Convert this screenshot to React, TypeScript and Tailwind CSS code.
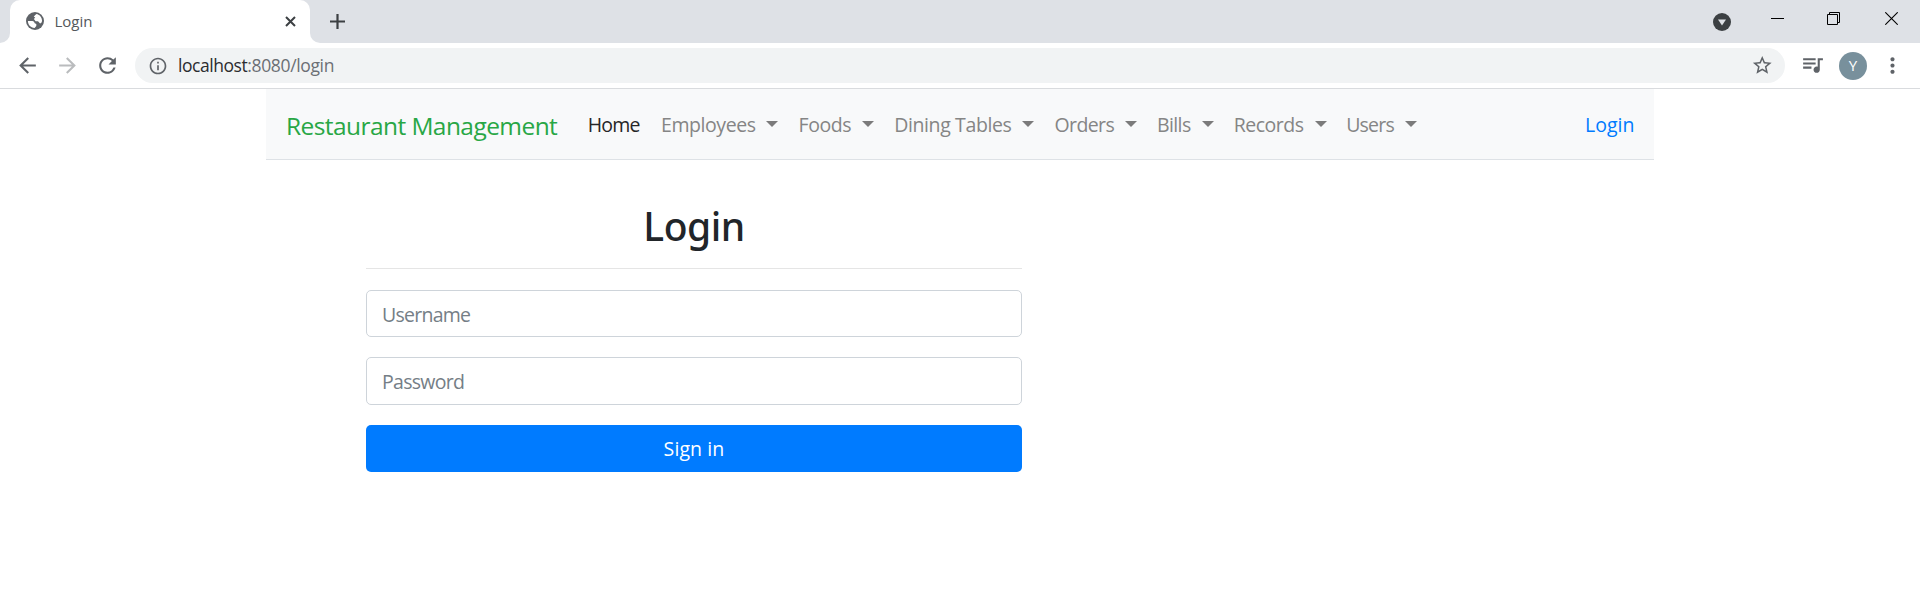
import React from "react";
import {
  MdArrowBack,
  MdArrowForward,
  MdInfoOutline,
  MdMoreVert,
  MdQueueMusic,
  MdRefresh,
  MdStarBorder,
} from "react-icons/md";

type Menu = { label: string; item: string; text: string };

const menus: Menu[] = [
  { label: "Employees", item: "w-[137.5px]", text: "w-[105.3px] tracking-[-0.42px]" },
  { label: "Foods", item: "w-[95.7px]", text: "w-[63.7px] tracking-[-0.42px]" },
  { label: "Dining Tables", item: "w-[160.3px]", text: "w-[128px] tracking-[-0.38px]" },
  { label: "Orders", item: "w-[102.5px]", text: "w-[70.3px] tracking-[-0.6px]" },
  { label: "Bills", item: "w-[76.8px]", text: "w-[45px] tracking-[-0.6px]" },
  { label: "Records", item: "w-[112.4px]", text: "w-[81px] tracking-[-0.5px]" },
  { label: "Users", item: "w-[72px]", text: "w-[59px] tracking-[-0.8px]" },
];

function Globe() {
  return (
    <svg viewBox="0 0 18 18" className="size-[18px] shrink-0">
      <circle cx="9" cy="9" r="9" fill="#5f6368" />
      <path
        d="M1.9 9h4.6q2 .2 2.2 2.3L10.3 12v2L8.6 16C4.4 15.6 1.9 12.5 1.9 9z"
        fill="#fff"
      />
      <path
        d="M10.4 2.1C14 2.8 16 5.6 16.1 9q-.4 2.3-2 2.4L12 9.2H9.6L7.9 7l1.3-1.4L7.8 4.8 9 3.2z"
        fill="#fff"
      />
    </svg>
  );
}

function TabStrip() {
  return (
    <div className="flex h-[43px] bg-[#dee1e6]">
      <div className="flex w-[10px] items-end bg-white">
        <div className="h-full w-full rounded-br-[10px] bg-[#dee1e6]" />
      </div>
      <div className="w-[300px] bg-[#dee1e6]">
        <div className="flex h-full items-center rounded-t-[10px] bg-white pl-[16px] pr-[14.5px] pb-px">
          <Globe />
          <span className="ml-[10.5px] text-[15px] text-[#54585c]">Login</span>
          <svg viewBox="0 0 11 11" className="ml-auto size-[11px]" stroke="#3c4043" strokeWidth="2">
            <path d="M1 1l9 9M10 1l-9 9" />
          </svg>
        </div>
      </div>
      <div className="w-[10px] bg-white">
        <div className="h-full w-full rounded-bl-[10px] bg-[#dee1e6]" />
      </div>
      <svg viewBox="0 0 15 15" className="ml-[10px] mt-[14px] size-[15px]" stroke="#3c4043" strokeWidth="2.2">
        <path d="M7.5 0v15M0 7.5h15" />
      </svg>
      <svg viewBox="0 0 18 18" className="ml-auto mt-[13px] size-[18px]">
        <circle cx="9" cy="9" r="9" fill="#3c4043" />
        <path d="M5 6.5h8l-4 6z" fill="#dee1e6" />
      </svg>
      <svg viewBox="0 0 13 13" className="ml-[40px] mt-[12px] size-[13px]" fill="#000">
        <path d="M0 6h13v1H0z" />
      </svg>
      <svg viewBox="0 0 13 13" className="ml-[43px] mt-[12px] size-[13px]" fill="none" stroke="#000">
        <path d="M.5 2.5h10v10H.5zM2.5 2.5v-2h10v10h-2" />
      </svg>
      <svg viewBox="0 0 13 13" className="ml-[45px] mr-[22px] mt-[12px] size-[13px]" fill="none" stroke="#000" strokeWidth="1.1">
        <path d="M.3 .3l12.4 12.4M12.7 .3L.3 12.7" />
      </svg>
    </div>
  );
}

function Toolbar() {
  return (
    <div className="flex h-[46px] items-center border-b border-[#d9dbde] bg-white pl-[15px] text-[#5f6368]">
      <MdArrowBack className="size-[25px] shrink-0" />
      <MdArrowForward className="ml-[15px] size-[25px] shrink-0 text-[#babcbe]" />
      <MdRefresh className="ml-[15px] size-[25px] shrink-0" />
      <div className="ml-[15px] flex h-[35px] w-[1650px] shrink-0 items-center rounded-full bg-[#f1f3f4] pl-[12.5px] pr-[11.5px]">
        <MdInfoOutline className="size-[20px] shrink-0" />
        <span className="ml-[10.5px] text-[17.5px]">
          <span className="tracking-[-0.45px] text-[#2b2c2f]">localhost</span>
          <span className="tracking-[-0.35px] text-[#6b6f74]">:8080/login</span>
        </span>
        <MdStarBorder className="ml-auto size-[22.5px] shrink-0" />
      </div>
      <MdQueueMusic className="mb-[3px] ml-[15px] size-[25px] shrink-0" />
      <div className="ml-[14px] flex size-[28px] shrink-0 items-center justify-center rounded-full bg-[#78909c] text-[15px] text-white">
        Y
      </div>
      <MdMoreVert className="ml-[13px] size-[25px] shrink-0" />
    </div>
  );
}

function Navbar() {
  return (
    <nav className="flex h-[71px] items-center border-b border-[#dee2e6] bg-[#f8f9fa] pl-[20px] pr-[19.5px] pt-px text-[19.5px] leading-[30px] text-[#858585]">
      <a className="w-[301.8px] shrink-0 whitespace-nowrap pt-[3px] text-[24.5px] tracking-[-0.57px] text-[#28a745]">
        Restaurant Management
      </a>
      <a className="w-[73.2px] shrink-0 tracking-[-0.8px] text-[#262627]">Home</a>
      {menus.map((m) => (
        <a key={m.label} className={`flex shrink-0 items-center ${m.item}`}>
          <span className={`shrink-0 whitespace-nowrap ${m.text}`}>{m.label}</span>
          <svg viewBox="0 0 12 6" className="mb-[1px] h-[6px] w-[12px] shrink-0" fill="#7b7b7b">
            <path d="M0 0h12L6 6z" />
          </svg>
        </a>
      ))}
      <a className="ml-auto text-[#007bff]">Login</a>
    </nav>
  );
}

function LoginForm() {
  const field =
    "block w-full rounded-[5px] border border-[#ced4da] bg-white px-[15px] text-[19.5px] text-[#495057] outline-none placeholder:text-[#757e86]";
  return (
    <form className="ml-[100px] mt-[42px] w-[656px]">
      <h1 className="text-center font-['Noto_Sans'] text-[39px] leading-[48px] font-medium tracking-[-0.5px] text-[#212529]">
        Login
      </h1>
      <hr className="mt-[18px] border-[#e5e5e5]" />
      <input type="text" placeholder="Username" className={`mt-[21px] h-[47px] pt-[2px] tracking-[-0.75px] ${field}`} />
      <input type="password" placeholder="Password" className={`mt-[20px] h-[48px] tracking-[-0.7px] ${field}`} />
      <button
        type="button"
        className="mt-[20px] h-[47px] w-full rounded-[5px] bg-[#007bff] pt-px text-[19.5px] tracking-[0.1px] text-white"
      >
        Sign in
      </button>
    </form>
  );
}

export default function App() {
  return (
    <div className="h-[593px] overflow-hidden bg-white font-['Open_Sans','Noto_Sans',sans-serif]">
      <TabStrip />
      <Toolbar />
      <main className="mx-auto w-[1388px]">
        <Navbar />
        <LoginForm />
      </main>
    </div>
  );
}
